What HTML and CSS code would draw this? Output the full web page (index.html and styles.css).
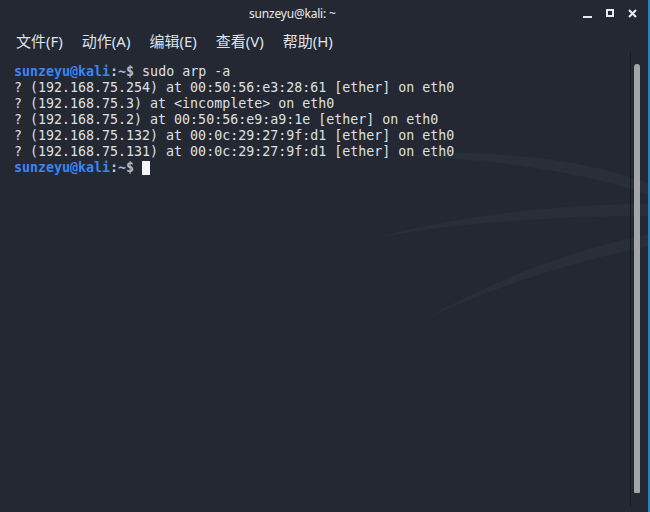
FILE: index.html
```html
<!DOCTYPE html>
<html lang="zh-CN">
<head>
  <meta charset="UTF-8">
  <title>sunzeyu@kali: ~</title>
  <link rel="stylesheet" href="styles.css">
</head>
<body>
  <div class="window">
    <div class="titlebar">
      <div class="title">sunzeyu@kali: ~</div>
      <div class="controls">
        <span class="btn-min"></span>
        <span class="btn-max"></span>
        <svg class="btn-close" width="9" height="9" viewBox="0 0 9 9">
          <path d="M1 1L8 8M8 1L1 8" stroke="#e8ebee" stroke-width="2"/>
        </svg>
      </div>
    </div>

    <div class="menubar">
      <span class="menu-item">文件(F)</span>
      <span class="menu-item">动作(A)</span>
      <span class="menu-item">编辑(E)</span>
      <span class="menu-item">查看(V)</span>
      <span class="menu-item">帮助(H)</span>
    </div>

    <div class="term-area">
      <svg class="dragon" width="650" height="460" viewBox="0 0 650 460">
        <path d="M405 100 C470 92 580 100 650 128 L650 140 C590 116 480 102 405 100 Z" fill="#292f39"/>
        <path d="M377 182 C450 160 560 148 650 148 L650 160 C560 160 460 166 377 182 Z" fill="#292f39"/>
        <path d="M427 262 C500 220 580 192 650 178 L650 190 C580 204 500 228 427 262 Z" fill="#292f39"/>
      </svg>

      <div class="terminal">
        <div class="line"><span class="user">sunzeyu@kali</span><span class="colon">:</span><span class="path">~$</span> sudo arp -a</div>
        <div class="line">? (192.168.75.254) at 00:50:56:e3:28:61 [ether] on eth0</div>
        <div class="line">? (192.168.75.3) at &lt;incomplete&gt; on eth0</div>
        <div class="line">? (192.168.75.2) at 00:50:56:e9:a9:1e [ether] on eth0</div>
        <div class="line">? (192.168.75.132) at 00:0c:29:27:9f:d1 [ether] on eth0</div>
        <div class="line">? (192.168.75.131) at 00:0c:29:27:9f:d1 [ether] on eth0</div>
        <div class="line"><span class="user">sunzeyu@kali</span><span class="colon">:</span><span class="path">~$</span> <span class="cursor"></span></div>
      </div>

      <div class="scrollbar">
        <div class="thumb"></div>
      </div>
    </div>
  </div>
</body>
</html>
```

FILE: styles.css
```css
html, body {
  margin: 0;
  padding: 0;
  background: #232833;
}
.window {
  width: 648px;
  height: 512px;
  background: #232833;
  border-right: 2px solid #1d86c4;
  display: flex;
  flex-direction: column;
  overflow: hidden;
}
.titlebar {
  height: 26px;
  display: flex;
  align-items: center;
  position: relative;
}
.title {
  margin-left: 249px;
  font-family: "Noto Sans", sans-serif;
  font-size: 12px;
  color: #e8ebee;
  letter-spacing: -0.2px;
}
.controls {
  margin-left: auto;
  margin-right: 11px;
  display: flex;
  align-items: center;
  gap: 14px;
}
.btn-min {
  width: 9px;
  height: 2px;
  background: #e8ebee;
  margin-top: 7px;
}
.btn-max {
  width: 4px;
  height: 4px;
  border: 2px solid #e8ebee;
}
.btn-close {
  display: block;
}
.menubar {
  height: 30px;
  display: flex;
  align-items: center;
  padding-left: 16px;
  gap: 19px;
  font-family: "Noto Sans", "Noto Sans CJK SC", sans-serif;
  font-size: 15px;
  color: #dfe3e8;
}
.menu-item {
  line-height: 30px;
}
.term-area {
  flex: 1;
  position: relative;
  display: flex;
}
.dragon {
  position: absolute;
  left: 0;
  top: 0;
}
.terminal {
  flex: 1;
  position: relative;
  padding: 8px 0 0 14px;
  font-family: "DejaVu Sans Mono", monospace;
  font-size: 13.3px;
  line-height: 16px;
  color: #dde1e6;
}
.line {
  white-space: pre;
  height: 16px;
}
.user {
  color: #3a86f2;
  font-weight: bold;
}
.colon {
  color: #c7ccd3;
  font-weight: bold;
}
.path {
  color: #a9bfd8;
  font-weight: bold;
}
.cursor {
  display: inline-block;
  width: 8px;
  height: 14px;
  background: #f4f6f8;
  vertical-align: -3px;
}
.scrollbar {
  position: relative;
  width: 17px;
  margin-top: -4px;
  margin-bottom: 5px;
  border-left: 1px solid #171b22;
}
.thumb {
  position: absolute;
  left: 3px;
  top: 12px;
  bottom: 14px;
  width: 6px;
  background: #a2a6aa;
  border-radius: 3px 3px 1px 1px;
}
```
